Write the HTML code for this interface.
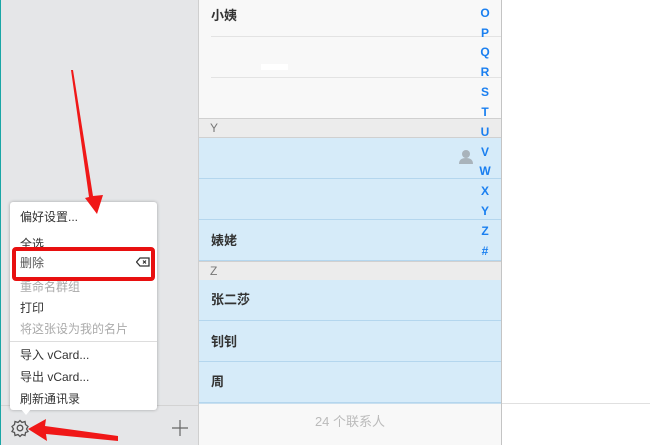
<!DOCTYPE html>
<html><head><meta charset="utf-8"><style>
*{margin:0;padding:0;box-sizing:border-box}
body{width:650px;height:445px;overflow:hidden;position:relative;background:#fff;font-family:"Liberation Sans","Noto Sans CJK SC",sans-serif}
.abs{position:absolute}
#side{left:0;top:0;width:199px;height:445px;background:#e5e6e8;border-left:1px solid #1aa6a6;border-right:1px solid #cfcfcf}
#sbot{left:1px;top:405px;width:197px;height:40px;border-top:1px solid #d3d3d3;background:#e5e6e8}
#list{left:199px;top:0;width:303px;height:445px;background:#f8f8f8;border-right:1px solid #c4c4c4}
.row{position:absolute;left:0;width:302px;font-size:13px;font-weight:bold;color:#333;padding-left:12px}
.sel{background:#d6ebf9;border-bottom:1px solid #b4d6ee}
.hdr{position:absolute;left:0;width:302px;height:20px;background:#ececec;border-top:1px solid #d0d0d0;border-bottom:1px solid #d0d0d0;color:#777;font-size:12px;padding-left:11px;line-height:18px}
.idx{position:absolute;left:280px;width:12px;text-align:center;color:#1a7ff0;font-size:12px;font-weight:bold}
#foot{left:0;top:403px;width:302px;height:42px;background:#f8f8f8;border-top:1px solid #c8dfef;color:#bbb;font-size:13px;text-align:center;line-height:36px}
#menu{left:10px;top:202px;width:147px;height:208px;background:#fff;border-radius:3px;box-shadow:0 0 3px rgba(0,0,0,.3);font-size:12px;color:#333}
.mi{position:absolute;left:10px;white-space:nowrap}
.dis{color:#aaa}
</style></head><body>
<div id="side" class="abs"></div>
<div id="sbot" class="abs"></div>
<div id="list" class="abs">
 <div class="row" style="top:0;height:36px;line-height:32px">小姨</div>
 <div class="abs" style="left:12px;top:36px;width:290px;height:1px;background:#e3e3e3"></div>
 <div class="abs" style="left:62px;top:64px;width:27px;height:6px;background:#fff"></div>
 <div class="abs" style="left:12px;top:77px;width:290px;height:1px;background:#e3e3e3"></div>
 <div class="hdr" style="top:118px">Y</div>
 <div class="row sel" style="top:138px;height:41px"></div>
 <div class="row sel" style="top:179px;height:41px"></div>
 <div class="row sel" style="top:220px;height:41px;line-height:42px">婊姥</div>
 <div class="hdr" style="top:261px">Z</div>
 <div class="row sel" style="top:280px;height:41px;line-height:40px">张二莎</div>
 <div class="row sel" style="top:321px;height:41px;line-height:42px">钊钊</div>
 <div class="row sel" style="top:362px;height:41px;line-height:40px">周</div>
 <svg class="abs" style="left:259px;top:149px" width="16" height="16"><circle cx="8" cy="5" r="4" fill="#a9b3bb"/><path d="M1 15 Q1 9 8 9 Q15 9 15 15Z" fill="#a9b3bb"/></svg>
 <div class="idx" style="top:6px">O</div><div class="idx" style="top:26px">P</div><div class="idx" style="top:45px">Q</div><div class="idx" style="top:65px">R</div><div class="idx" style="top:85px">S</div><div class="idx" style="top:105px">T</div><div class="idx" style="top:125px">U</div><div class="idx" style="top:145px">V</div><div class="idx" style="top:164px">W</div><div class="idx" style="top:184px">X</div><div class="idx" style="top:204px">Y</div><div class="idx" style="top:224px">Z</div><div class="idx" style="top:244px">#</div>
 <div id="foot" class="abs">24 个联系人</div>
</div>
<div class="abs" style="left:502px;top:403px;width:148px;height:1px;background:#e0e0e0"></div>
<div id="menu" class="abs">
 <div class="mi" style="top:6px">偏好设置...</div>
 <div class="mi" style="top:33px">全选</div>
 <div class="mi dis" style="top:76px">重命名群组</div>
 <div class="mi" style="top:97px">打印</div>
 <div class="mi dis" style="top:118px">将这张设为我的名片</div>
 <div class="abs" style="left:0;top:139px;width:147px;height:1px;background:#ddd"></div>
 <div class="mi" style="top:144px">导入 vCard...</div>
 <div class="mi" style="top:166px">导出 vCard...</div>
 <div class="mi" style="top:188px">刷新通讯录</div>
</div>
<div class="abs" style="left:12px;top:247px;width:143px;height:34px;border:4px solid #e81010;border-radius:4px;background:#fff"></div>
<div class="abs" style="left:20px;top:254px;font-size:12px;color:#555">删除</div>
<svg class="abs" style="left:136px;top:257px" width="14" height="10"><path d="M4 1H13V9H4L0.5 5Z" fill="none" stroke="#333" stroke-width="1.3"/><path d="M7 3.5L10 6.5M10 3.5L7 6.5" stroke="#333" stroke-width="1.2"/></svg>
<svg class="abs" style="left:0;top:0" width="650" height="445">
 <path d="M20 408L26 415L32 408Z" fill="#fff"/>
 <g fill="none" stroke="#555" stroke-width="1.3"><circle cx="20" cy="428" r="2.8"/><path d="M20 420.5L22 422.5L25 421.5L25.5 424.5L28 426.5L26.5 429L28 431.5L25.5 432.5L25 435.5L22 434.5L20 436.5L18 434.5L15 435.5L14.5 432.5L12 431.5L13.5 429L12 426.5L14.5 424.5L15 421.5L18 422.5Z"/></g>
 <path d="M180 420V436M172 428H188" stroke="#666" stroke-width="1.2"/>
 <path d="M71 70L73 70L93 196L103 195L97 214L85 198L89 197Z" fill="#f01818"/>
 <path d="M118 436L118 441L46 434L47 441L28 429L46 419L45 426Z" fill="#f01818"/>
</svg>
</body></html>
